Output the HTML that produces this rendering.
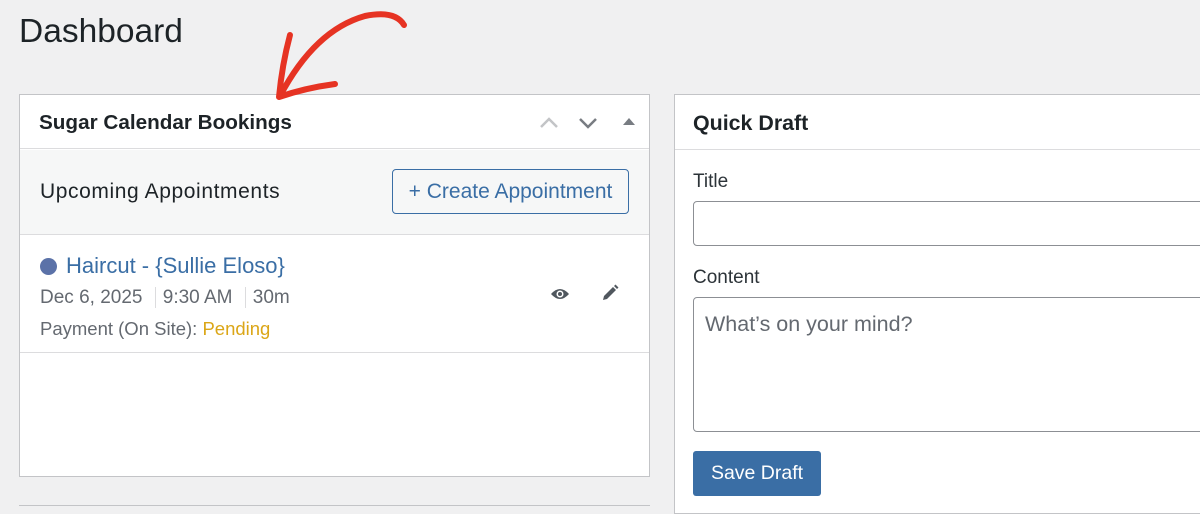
<!DOCTYPE html>
<html><head><meta charset="utf-8"><style>
*{box-sizing:border-box;margin:0;padding:0}
body{width:1200px;height:507px;background:#f0f0f1;font-family:"Liberation Sans",sans-serif;position:relative;overflow:hidden;color:#1d2327}
.abs{position:absolute;white-space:nowrap}
h1{position:absolute;left:19px;top:13px;font-size:33.5px;font-weight:400;color:#1d2327}
.panel{position:absolute;background:#fff;border:1px solid #c3c4c7}
</style></head><body>
<h1>Dashboard</h1>
<div class="panel" style="left:19px;top:94px;width:631px;height:383px">
  <div class="abs" style="left:0;top:0;width:629px;height:54px;border-bottom:1px solid #dcdcde">
    <div class="abs" style="left:19px;top:16px;font-size:20.7px;font-weight:700">Sugar Calendar Bookings</div>
    <svg class="abs" style="left:518px;top:18px" width="100" height="20" viewBox="0 0 100 20">
      <path d="M3 14 L11 6 L19 14" fill="none" stroke="#c3c4c7" stroke-width="2.5"/>
      <path d="M42 6 L50 14 L58 6" fill="none" stroke="#787c82" stroke-width="2.5"/>
      <path d="M85 12 L91 5 L97 12 Z" fill="#787c82"/>
    </svg>
  </div>
  <div class="abs" style="left:0;top:55px;width:629px;height:85px;background:#f6f7f7;border-bottom:1px solid #dcdcde">
    <div class="abs" style="left:20px;top:30px;font-size:21px;letter-spacing:0.6px;color:#1d2327">Upcoming Appointments</div>
    <div class="abs" style="left:372px;top:19px;width:237px;height:45px;border:1px solid #3a6ea5;border-radius:4px;background:#f6f7f7;color:#3a6ea5;font-size:21px;line-height:43px;text-align:center">+ Create Appointment</div>
  </div>
  <div class="abs" style="left:20px;top:163px;width:17px;height:17px;border-radius:50%;background:#5b72a8"></div>
  <div class="abs" style="left:46px;top:158px;font-size:22px;color:#3a6ea5">Haircut - {Sullie Eloso}</div>
  <div class="abs" style="left:20px;top:192px;font-size:19px;color:#646970">Dec 6, 2025 <span style="border-left:1px solid #dcdcde;margin:0 7px"></span>9:30 AM <span style="border-left:1px solid #dcdcde;margin:0 7px"></span>30m</div>
  <div class="abs" style="left:20px;top:223px;font-size:18.5px;color:#646970">Payment (On Site): <span style="color:#dba617">Pending</span></div>
  <svg class="abs" style="left:530px;top:189px" width="20" height="20" viewBox="0 0 20 20"><path d="M1 10 Q10 0 19 10 Q10 20 1 10Z" fill="#50575e"/><circle cx="10" cy="10" r="3.5" fill="#fff"/><circle cx="10" cy="10" r="2" fill="#50575e"/></svg>
  <svg class="abs" style="left:580px;top:188px" width="20" height="20" viewBox="0 0 20 20"><path d="M3 17 L4 13 L13 4 L16 7 L7 16 Z M14 3 L15.5 1.5 L18.5 4.5 L17 6Z" fill="#50575e"/></svg>
  <div class="abs" style="left:0;top:257px;width:629px;border-top:1px solid #dcdcde"></div>
</div>
<div class="abs" style="left:19px;top:505px;width:631px;border-top:1px solid #c3c4c7"></div>
<div class="panel" style="left:674px;top:94px;width:540px;height:420px">
  <div class="abs" style="left:0;top:0;width:540px;height:55px;border-bottom:1px solid #dcdcde">
    <div class="abs" style="left:18px;top:16px;font-size:21.4px;font-weight:700">Quick Draft</div>
  </div>
  <div class="abs" style="left:18px;top:76px;font-size:19px;color:#2c3338">Title</div>
  <div class="abs" style="left:18px;top:106px;width:530px;height:45px;border:1px solid #8c8f94;border-radius:4px"></div>
  <div class="abs" style="left:18px;top:172px;font-size:19px;color:#2c3338">Content</div>
  <div class="abs" style="left:18px;top:202px;width:530px;height:135px;border:1px solid #8c8f94;border-radius:4px"></div>
  <div class="abs" style="left:30px;top:217px;font-size:21.5px;color:#646970">What’s on your mind?</div>
  <div class="abs" style="left:18px;top:356px;width:128px;height:45px;background:#3a6ea5;border-radius:3px;color:#fff;font-size:19.5px;line-height:45px;text-align:center">Save Draft</div>
</div>
<svg class="abs" style="left:0;top:0" width="1200" height="507">
  <path d="M404 25 Q395 10 365 16 Q315 30 280 96" fill="none" stroke="#e63323" stroke-width="6" stroke-linecap="round"/>
  <path d="M290 35 Q282 65 279 97 Q305 88 335 84" fill="none" stroke="#e63323" stroke-width="6" stroke-linecap="round" stroke-linejoin="round"/>
</svg>
</body></html>
